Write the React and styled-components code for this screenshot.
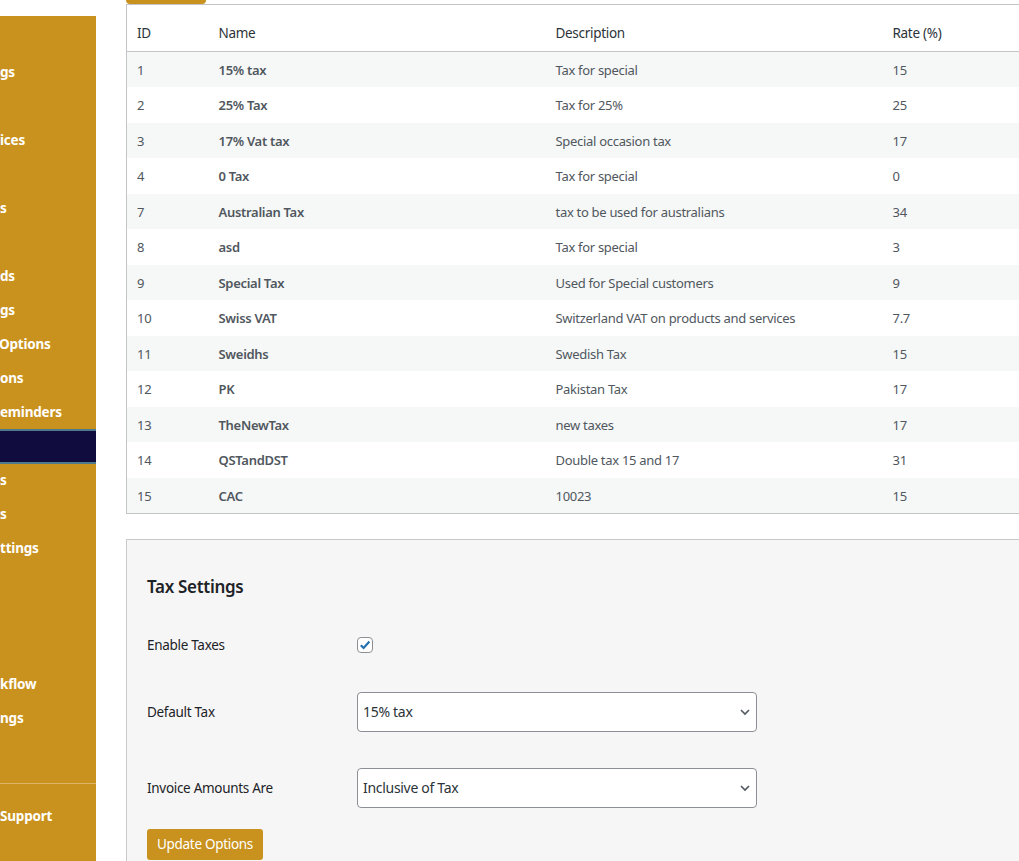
import styled, { createGlobalStyle } from "styled-components";

const GlobalStyle = createGlobalStyle`
    html, body {
        margin: 0;
        padding: 0;
        background: #fff;
        overflow: hidden;
        font-family: "Noto Sans", "Open Sans", sans-serif;
        font-size: 13px;
        letter-spacing: -0.3px;
        color: #3c434a;
    }
`;

const GOLD = "#c9921e";

const Page = styled.div`
    display: flex;
    align-items: flex-start;
    width: 1300px;
    min-height: 861px;
`;

const Sidebar = styled.nav`
    flex: 0 0 96px;
    width: 96px;
    min-height: 861px;
    display: flex;
    flex-direction: column;
    overflow: hidden;
`;

const SidebarTop = styled.div`
    height: 16px;
    background: #fff;
`;

const Menu = styled.ul`
    list-style: none;
    margin: 0;
    padding: 5px 0 0;
    background: ${GOLD};
    flex: 1;
`;

const MenuItem = styled.li`
    line-height: 34px;
    font-size: 13.5px;
    font-weight: 700;
    letter-spacing: -0.2px;
    color: #fff;
    white-space: nowrap;
    margin-left: ${(p) => p.indent || 0}px;
    box-sizing: border-box;
    background: ${(p) => (p.active ? "#110c3e" : "transparent")};
    border-top: ${(p) => (p.active ? "2px solid #4f7a8d" : "none")};
    border-bottom: ${(p) => (p.active ? "2px solid #4f7a8d" : "none")};
    height: ${(p) => (p.active ? "35px" : "34px")};
    margin-bottom: ${(p) => (p.active ? "-1px" : "0")};
`;

const MenuSeparator = styled.li`
    height: 1px;
    background: #ddb56a;
    margin: 14px 0 15px;
`;

const Main = styled.main`
    margin-left: 30px;
    width: 1093px;
`;

const TabEdge = styled.div`
    width: 80px;
    height: 4px;
    background: ${GOLD};
    border-radius: 0 0 4px 4px;
`;

const Table = styled.table`
    border-collapse: collapse;
    table-layout: fixed;
    width: 1093px;
    border: 1px solid #c3c4c7;
    background: #fff;
`;

const HeadCell = styled.th`
    text-align: left;
    font-weight: 400;
    font-size: 13.5px;
    color: #2c3338;
    height: 47px;
    padding: 9px 10px 0;
    box-sizing: border-box;
    border-bottom: 1px solid #c3c4c7;
    width: ${(p) => p.w}px;
`;

const Row = styled.tr`
    background: ${(p) => (p.striped ? "#f6f7f7" : "#fff")};
`;

const Cell = styled.td`
    height: 35.5px;
    padding: 1px 10px 0;
    box-sizing: border-box;
    font-size: 13px;
    color: #50575e;
    font-weight: ${(p) => (p.strong ? 600 : 400)};
`;

const SettingsCard = styled.section`
    margin-top: 25px;
    background: #f6f6f6;
    border: 1px solid #c9c9c9;
    padding: 35px 20px 40px;
    min-height: 400px;
`;

const Heading = styled.h2`
    margin: 0;
    font-size: 17px;
    font-weight: 600;
    line-height: 23px;
    color: #1d2327;
`;

const FieldRow = styled.div`
    display: flex;
    align-items: center;
    height: 40px;
    margin-top: ${(p) => p.gap}px;
`;

const Label = styled.div`
    width: 210px;
    flex: 0 0 210px;
    font-size: 13.5px;
    color: #1d2327;
`;

const CheckBox = styled.span`
    display: inline-flex;
    align-items: center;
    justify-content: center;
    width: 16px;
    height: 16px;
    box-sizing: border-box;
    border: 1px solid #8c8f94;
    border-radius: 4px;
    background: #fff;
`;

const SelectWrap = styled.div`
    position: relative;
    width: 400px;
`;

const Select = styled.select`
    appearance: none;
    width: 400px;
    height: 40px;
    box-sizing: border-box;
    border: 1px solid #8c8f94;
    border-radius: 4px;
    background: #fff;
    padding: 0 24px 0 5px;
    font-family: inherit;
    letter-spacing: -0.3px;
    font-size: 14px;
    color: #2c3338;
`;

const Chevron = styled.svg`
    position: absolute;
    right: 6px;
    top: 14px;
    pointer-events: none;
`;

const Button = styled.button`
    margin-top: 21px;
    height: 31px;
    padding: 0 10px;
    border: none;
    border-radius: 3px;
    background: ${GOLD};
    color: #fff;
    font-family: inherit;
    letter-spacing: -0.3px;
    font-size: 13.5px;
    cursor: pointer;
`;

const menu = [
    "", "gs", "", "ices", "", "s", "", "ds", "gs", "Options", "ons", "eminders",
    null, "s", "s", "ttings", "", "", "", "kflow", "ngs", "",
];

const taxes = [
    [1, "15% tax", "Tax for special", "15"],
    [2, "25% Tax", "Tax for 25%", "25"],
    [3, "17% Vat tax", "Special occasion tax", "17"],
    [4, "0 Tax", "Tax for special", "0"],
    [7, "Australian Tax", "tax to be used for australians", "34"],
    [8, "asd", "Tax for special", "3"],
    [9, "Special Tax", "Used for Special customers", "9"],
    [10, "Swiss VAT", "Switzerland VAT on products and services", "7.7"],
    [11, "Sweidhs", "Swedish Tax", "15"],
    [12, "PK", "Pakistan Tax", "17"],
    [13, "TheNewTax", "new taxes", "17"],
    [14, "QSTandDST", "Double tax 15 and 17", "31"],
    [15, "CAC", "10023", "15"],
];

const ChevronIcon = () => (
    <Chevron width="12" height="12" viewBox="0 0 12 12">
        <path d="M2 4 L6 8 L10 4" fill="none" stroke="#50575e" strokeWidth="1.6" />
    </Chevron>
);

const App = () => {
    return (
        <>
            <GlobalStyle />
            <Page>
                <Sidebar>
                    <SidebarTop />
                    <Menu>
                        {menu.map((label, i) =>
                            label === null ? (
                                <MenuItem key={i} active />
                            ) : (
                                <MenuItem key={i} indent={label === "Options" ? -1 : 0}>
                                    {label}
                                </MenuItem>
                            )
                        )}
                        <MenuSeparator />
                        <MenuItem>Support</MenuItem>
                    </Menu>
                </Sidebar>
                <Main>
                    <TabEdge />
                    <Table>
                        <thead>
                            <tr>
                                <HeadCell w={82}>ID</HeadCell>
                                <HeadCell w={337}>Name</HeadCell>
                                <HeadCell w={337}>Description</HeadCell>
                                <HeadCell w={337}>Rate (%)</HeadCell>
                            </tr>
                        </thead>
                        <tbody>
                            {taxes.map(([id, name, desc, rate], i) => (
                                <Row key={id} striped={i % 2 === 0}>
                                    <Cell>{id}</Cell>
                                    <Cell strong>{name}</Cell>
                                    <Cell>{desc}</Cell>
                                    <Cell>{rate}</Cell>
                                </Row>
                            ))}
                        </tbody>
                    </Table>
                    <SettingsCard>
                        <Heading>Tax Settings</Heading>
                        <FieldRow gap={27}>
                            <Label>Enable Taxes</Label>
                            <CheckBox>
                                <svg width="12" height="12" viewBox="0 0 12 12">
                                    <path
                                        d="M1.8 6.2 L4.6 9 L10.4 2.6"
                                        fill="none"
                                        stroke="#2271b1"
                                        strokeWidth="2.2"
                                    />
                                </svg>
                            </CheckBox>
                        </FieldRow>
                        <FieldRow gap={27}>
                            <Label>Default Tax</Label>
                            <SelectWrap>
                                <Select defaultValue="15% tax">
                                    {taxes.map((t) => (
                                        <option key={t[0]}>{t[1]}</option>
                                    ))}
                                </Select>
                                <ChevronIcon />
                            </SelectWrap>
                        </FieldRow>
                        <FieldRow gap={36}>
                            <Label>Invoice Amounts Are</Label>
                            <SelectWrap>
                                <Select defaultValue="Inclusive of Tax">
                                    <option>Inclusive of Tax</option>
                                    <option>Exclusive of Tax</option>
                                </Select>
                                <ChevronIcon />
                            </SelectWrap>
                        </FieldRow>
                        <Button>Update Options</Button>
                    </SettingsCard>
                </Main>
            </Page>
        </>
    );
};

export default App;
